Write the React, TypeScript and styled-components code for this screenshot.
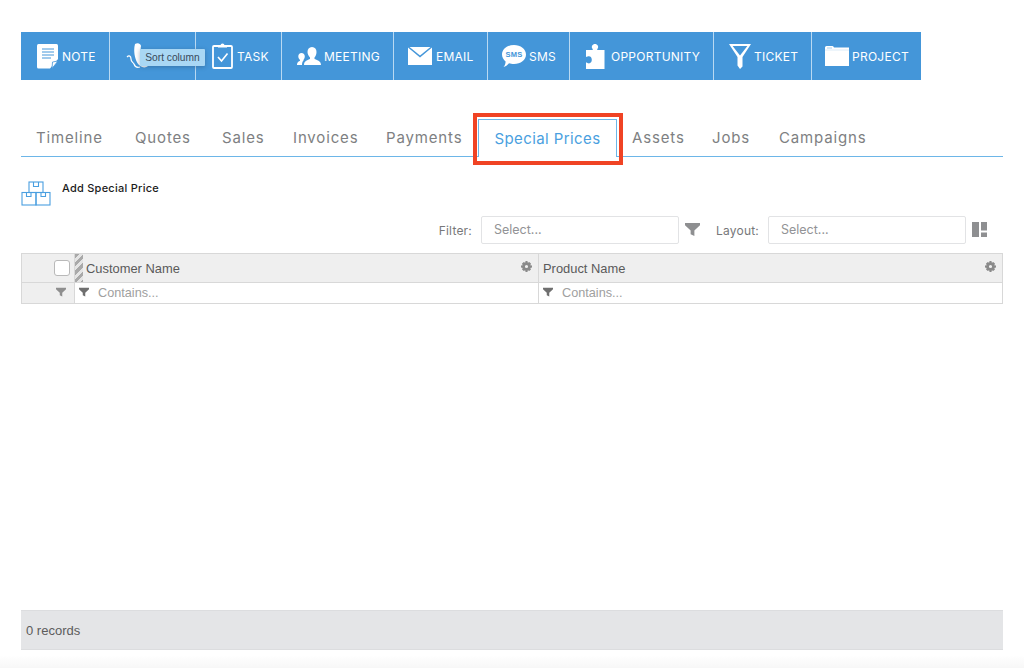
import styled, { createGlobalStyle } from 'styled-components';

const GlobalStyle = createGlobalStyle`
  html, body { margin: 0; padding: 0; background: #fff; }
  body { width: 1024px; height: 668px; overflow: hidden; font-family: Inter, "Liberation Sans", sans-serif; }
`;

const Page = styled.div`
  position: relative;
  width: 1024px;
  height: 668px;
  overflow: hidden;
`;

const Toolbar = styled.div`
  position: absolute;
  left: 21px;
  top: 32px;
  display: flex;
  height: 48px;
  background: #4496d9;
`;

const ToolButton = styled.div<{ $w: number; $pad: number; $gap: number }>`
  display: flex;
  align-items: center;
  box-sizing: border-box;
  width: ${p => p.$w}px;
  height: 48px;
  padding-left: ${p => p.$pad}px;
  gap: ${p => p.$gap}px;
  border-right: 1px solid #b9d9f2;
  color: #fff;
  font-size: 12px;
  font-weight: 400;
  letter-spacing: 0.25px;
  white-space: nowrap;
  &:last-child { border-right: 0; }
`;

const Tooltip = styled.div`
  position: absolute;
  left: 140px;
  top: 49px;
  width: 65px;
  height: 17px;
  background: #a9d7f4;
  border-radius: 1px;
  box-shadow: 0 1px 4px rgba(40, 70, 100, 0.4);
  color: #37495a;
  font-family: "Liberation Sans", Arial, sans-serif;
  font-size: 10.2px;
  line-height: 17px;
  text-align: center;
`;

const TabRow = styled.div`
  position: absolute;
  left: 21px;
  top: 119px;
  width: 982px;
  height: 38px;
  box-sizing: border-box;
  border-bottom: 1px solid #6db6e8;
`;

const Tab = styled.div<{ $x: number }>`
  position: absolute;
  left: ${p => p.$x - 21}px;
  top: 0;
  line-height: 38px;
  color: #7e7f82;
  font-size: 15px;
  font-weight: 400;
  letter-spacing: 0.85px;
  white-space: nowrap;
`;

const ActiveTab = styled.div`
  position: absolute;
  left: 457px;
  top: 0;
  width: 139px;
  height: 38px;
  box-sizing: border-box;
  border: 1px solid #6db6e8;
  border-bottom: 0;
  background: #fff;
  color: #4a9fe0;
  font-size: 15px;
  font-weight: 400;
  letter-spacing: 0.4px;
  line-height: 37px;
  text-align: center;
  white-space: nowrap;
`;

const Highlight = styled.div`
  position: absolute;
  left: 473px;
  top: 113px;
  width: 150px;
  height: 52px;
  box-sizing: border-box;
  border: 4px solid #f04324;
`;

const AddAction = styled.div`
  position: absolute;
  left: 21px;
  top: 181px;
  display: flex;
  align-items: flex-start;
  gap: 11px;
  color: #1c1c1c;
  font-size: 11px;
  font-weight: 500;
  letter-spacing: 0.25px;
  line-height: 14px;
`;

const AddLabel = styled.span`
  margin-top: 0;
`;

const FilterLabel = styled.label<{ $right: number }>`
  position: absolute;
  right: ${p => 1024 - p.$right}px;
  top: 223px;
  color: #77787a;
  font-size: 12px;
  font-weight: 400;
  letter-spacing: 0.2px;
  line-height: 15px;
`;

const SelectBox = styled.div<{ $x: number }>`
  position: absolute;
  left: ${p => p.$x}px;
  top: 216px;
  width: 198px;
  height: 28px;
  box-sizing: border-box;
  padding-left: 12px;
  background: #fff;
  border: 1px solid #e2e3e5;
  border-radius: 2px;
  color: #929396;
  font-size: 12.5px;
  line-height: 26px;
`;

const IconSlot = styled.div<{ $x: number; $y: number }>`
  position: absolute;
  left: ${p => p.$x}px;
  top: ${p => p.$y}px;
  line-height: 0;
`;

const Grid = styled.div`
  position: absolute;
  left: 21px;
  top: 253px;
  width: 982px;
  box-sizing: border-box;
  border: 1px solid #d8d8d8;
  font-family: "Liberation Sans", Arial, sans-serif;
`;

const GridRow = styled.div<{ $h: number }>`
  display: grid;
  grid-template-columns: 53px 464px 1fr;
  height: ${p => p.$h}px;
`;

const HeaderCell = styled.div<{ $last?: boolean }>`
  position: relative;
  box-sizing: border-box;
  background: #efefef;
  border-bottom: 1px solid #d8d8d8;
  border-right: ${p => (p.$last ? 0 : '1px solid #d8d8d8')};
  color: #5a5a5a;
  font-size: 12.9px;
  line-height: 29px;
`;

const HeaderText = styled.span<{ $x: number }>`
  position: absolute;
  left: ${p => p.$x}px;
  top: 0;
`;

const Gear = styled.div`
  position: absolute;
  right: 6px;
  top: 7px;
  line-height: 0;
`;

const Stripes = styled.div`
  position: absolute;
  left: 0;
  top: 0;
  width: 8px;
  height: 100%;
  background: repeating-linear-gradient(135deg, #a9a9a9 0 3px, #e4e4e4 3px 6px);
`;

const Check = styled.div`
  position: absolute;
  left: 32px;
  top: 6px;
  width: 16px;
  height: 16px;
  box-sizing: border-box;
  background: #fff;
  border: 1px solid #b9b9b9;
  border-radius: 3px;
`;

const FilterCell = styled.div<{ $shade?: boolean; $last?: boolean }>`
  position: relative;
  box-sizing: border-box;
  background: ${p => (p.$shade ? '#efefef' : '#fff')};
  border-right: ${p => (p.$last ? 0 : '1px solid #d8d8d8')};
  color: #a0a0a0;
  font-size: 12.7px;
  line-height: 21px;
`;

const FilterFunnel = styled.div<{ $x: number }>`
  position: absolute;
  left: ${p => p.$x}px;
  top: 4px;
  line-height: 0;
`;

const Placeholder = styled.span`
  position: absolute;
  left: 23px;
  top: 0;
`;

const Footer = styled.div`
  position: absolute;
  left: 21px;
  top: 610px;
  width: 982px;
  height: 40px;
  box-sizing: border-box;
  padding-left: 5px;
  background: #e4e5e7;
  border-top: 1px solid #dcdddf;
  border-bottom: 1px solid #dcdddf;
  color: #5c5c5c;
  font-family: "Liberation Sans", Arial, sans-serif;
  font-size: 13px;
  line-height: 40px;
`;

const BottomFade = styled.div`
  position: absolute;
  left: 0;
  right: 0;
  top: 655px;
  height: 13px;
  background: linear-gradient(#ffffff, #f7f7f7);
`;

const NoteIcon = () => (
  <svg width="21" height="25" viewBox="0 0 21 25">
    <path d="M0 1.5Q0 0 1.5 0H19.5Q21 0 21 1.5V15L13 24.5H1.5Q0 24.5 0 23Z" fill="#fff" />
    <path d="M5 5H17M5 8H17M5 11H17M5 14H14" stroke="#4496d9" strokeWidth="1" />
    <path d="M15 24.5 L15.5 18 L21 17 Z" fill="#fff" stroke="#4496d9" strokeWidth="0.8" />
  </svg>
);

const PhoneIcon = () => (
  <svg width="24" height="26" viewBox="0 0 24 26">
    <path d="M9 1C12 -1 15 1 15 3C14 8 15 14 19 18C21 19 22 21 22 23C20 25 16 25 13 22C9 18 7 8 9 1Z" fill="#fff" />
    <path d="M1 14C3 12 5 13 5 16C5 19 7 19 8 21C9 24 11 25 14 24" fill="none" stroke="#fff" strokeWidth="1.2" />
  </svg>
);

const TaskIcon = () => (
  <svg width="21" height="26" viewBox="0 0 21 26">
    <rect x="1" y="3" width="19" height="22" rx="1" fill="none" stroke="#fff" strokeWidth="1.8" />
    <path d="M6 4.5V2.5H8.5A2 2 0 0 1 12.5 2.5H15V4.5Z" fill="#fff" />
    <path d="M6 14L9.5 18L15.5 10.5" fill="none" stroke="#fff" strokeWidth="1.6" />
  </svg>
);

const MeetingIcon = () => (
  <svg width="24" height="18" viewBox="0 0 24 18">
    <path d="M15 0C18 0 19.5 2.2 19.5 5C19.5 7.5 18.5 9.5 17.5 10.5V12C19.5 13 24 13.5 24 18H7C7 13.5 11 13 13 12V10.5C12 9.5 10.5 7.5 10.5 5C10.5 2.2 12 0 15 0Z" fill="#fff" />
    <path d="M4.5 6C6.5 6 7.8 7.5 7.8 9.5C7.8 11 7 12.3 6.5 13V13.5C5.5 14.3 5 16 5 18H0C0 15 2 14.5 3 13.8V13C2.2 12.3 1.3 11 1.3 9.5C1.3 7.5 2.5 6 4.5 6Z" fill="#fff" />
  </svg>
);

const EmailIcon = () => (
  <svg width="24" height="18" viewBox="0 0 24 18">
    <path d="M0 0.5L12 10.5L24 0.5V18H0Z" fill="#fff" />
    <path d="M1.5 0H22.5L12 8.5Z" fill="#fff" />
  </svg>
);

const SmsIcon = () => (
  <svg width="24" height="23" viewBox="0 0 24 23">
    <path d="M12 0C18.6 0 24 4 24 9.5S18.6 19 12 19C10 19 8.5 18.7 7 18.2C5.5 20 3.5 21.8 1.5 22C2.8 20.5 3.6 18.5 3.6 16.4C1.4 14.6 0 12.2 0 9.5C0 4 5.4 0 12 0Z" fill="#fff" />
    <text x="12" y="12" textAnchor="middle" fontFamily="'Liberation Sans', sans-serif" fontSize="7.5" fontWeight="700" fill="#4496d9">SMS</text>
  </svg>
);

const PuzzleIcon = () => (
  <svg width="19" height="25" viewBox="0 0 19 25">
    <path d="M0 6H6.2C7 6 7 5 6.3 4.4C5 2.8 6.5 0 9 0C11.5 0 13 2.8 11.7 4.4C11 5 11 6 11.8 6H18.5V25H0V18.5C1 18.5 1.2 19 2 19.3C4.5 19.8 5.8 18 5.8 15.8C5.8 13.5 4.5 11.8 2 12.3C1.2 12.5 1 13 0 13Z" fill="#fff" />
  </svg>
);

const TicketIcon = () => (
  <svg width="22" height="25" viewBox="0 0 22 25">
    <path fillRule="evenodd" d="M0 0H22L13.5 13V22.5L11 25L8.5 21.5V13ZM3.6 2L11 11.5L18.4 2Z" fill="#fff" />
  </svg>
);

const ProjectIcon = () => (
  <svg width="24" height="20" viewBox="0 0 24 20">
    <path d="M0 1.5Q0 0 1.5 0H7.5Q8.5 0 9 1.5H24V20H0Z" fill="#fff" />
    <path d="M2 2H7" stroke="#a9cfee" strokeWidth="1" />
    <path d="M0 4H24" stroke="#dcecf8" strokeWidth="1" />
  </svg>
);

const BoxesIcon = () => (
  <svg width="30" height="25" viewBox="0 0 30 25" fill="none" stroke="#4a9fe0" strokeWidth="1.1">
    <rect x="8" y="1" width="14" height="10.5" />
    <rect x="1" y="11.5" width="14" height="12.5" />
    <rect x="15" y="11.5" width="14" height="12.5" />
    <path d="M12.5 1V5.5H17.5V1M5.5 11.5V15.5H10V11.5M20 11.5V15.5H24.5V11.5" />
  </svg>
);

const Funnel = ({ size, color }: { size: number; color: string }) => (
  <svg width={size} height={size} viewBox="0 0 16 16">
    <path d="M0 1H16V3.5L10 9V15L6 13V9L0 3.5Z" fill={color} />
  </svg>
);

const LayoutIcon = () => (
  <svg width="15" height="15" viewBox="0 0 15 15">
    <rect x="0" y="0" width="7" height="15" fill="#8e8f91" />
    <rect x="9" y="0" width="6" height="8.5" fill="#8e8f91" />
    <rect x="9" y="10.5" width="6" height="4.5" fill="#8e8f91" />
  </svg>
);

const GearIcon = () => (
  <svg width="11" height="11" viewBox="0 0 24 24">
    <path
      fillRule="evenodd"
      d="M10 0H14L15 4L18 2L22 6L20 9L24 10V14L20 15L22 18L18 22L15 20L14 24H10L9 20L6 22L2 18L4 15L0 14V10L4 9L2 6L6 2L9 4ZM12 8.5A3.5 3.5 0 1 0 12 15.5A3.5 3.5 0 1 0 12 8.5Z"
      fill="#8a8a8a"
    />
  </svg>
);

const tools = [
  { label: 'NOTE', w: 89, pad: 16, gap: 4, icon: <NoteIcon /> },
  { label: '', w: 86, pad: 16, gap: 0, icon: <PhoneIcon /> },
  { label: 'TASK', w: 86, pad: 16, gap: 4, icon: <TaskIcon /> },
  { label: 'MEETING', w: 112, pad: 15, gap: 3, icon: <MeetingIcon /> },
  { label: 'EMAIL', w: 94, pad: 14, gap: 4, icon: <EmailIcon /> },
  { label: 'SMS', w: 82, pad: 14, gap: 3, icon: <SmsIcon /> },
  { label: 'OPPORTUNITY', w: 144, pad: 16, gap: 6, icon: <PuzzleIcon /> },
  { label: 'TICKET', w: 98, pad: 15, gap: 3, icon: <TicketIcon /> },
  { label: 'PROJECT', w: 109, pad: 13, gap: 3, icon: <ProjectIcon /> },
];

const tabs = [
  { label: 'Timeline', x: 36 },
  { label: 'Quotes', x: 135 },
  { label: 'Sales', x: 222 },
  { label: 'Invoices', x: 293 },
  { label: 'Payments', x: 386 },
  { label: 'Assets', x: 632 },
  { label: 'Jobs', x: 712 },
  { label: 'Campaigns', x: 779 },
];

export default function App() {
  return (
    <Page>
      <GlobalStyle />
      <Toolbar>
        {tools.map(t => (
          <ToolButton key={t.w + t.label} $w={t.w} $pad={t.pad} $gap={t.gap}>
            {t.icon}
            {t.label}
          </ToolButton>
        ))}
      </Toolbar>
      <Tooltip>Sort column</Tooltip>

      <TabRow>
        {tabs.map(t => (
          <Tab key={t.label} $x={t.x}>{t.label}</Tab>
        ))}
        <ActiveTab>Special Prices</ActiveTab>
      </TabRow>
      <Highlight />

      <AddAction>
        <BoxesIcon />
        <AddLabel>Add Special Price</AddLabel>
      </AddAction>

      <FilterLabel $right={472}>Filter:</FilterLabel>
      <SelectBox $x={481}>Select...</SelectBox>
      <IconSlot $x={685} $y={222}><Funnel size={15} color="#8e8f91" /></IconSlot>
      <FilterLabel $right={759}>Layout:</FilterLabel>
      <SelectBox $x={768}>Select...</SelectBox>
      <IconSlot $x={972} $y={222}><LayoutIcon /></IconSlot>

      <Grid>
        <GridRow $h={29}>
          <HeaderCell><Check /></HeaderCell>
          <HeaderCell>
            <Stripes />
            <HeaderText $x={11}>Customer Name</HeaderText>
            <Gear><GearIcon /></Gear>
          </HeaderCell>
          <HeaderCell $last>
            <HeaderText $x={4}>Product Name</HeaderText>
            <Gear><GearIcon /></Gear>
          </HeaderCell>
        </GridRow>
        <GridRow $h={20}>
          <FilterCell $shade>
            <FilterFunnel $x={34}><Funnel size={10} color="#8e8e8e" /></FilterFunnel>
          </FilterCell>
          <FilterCell>
            <FilterFunnel $x={4}><Funnel size={10} color="#6f6f6f" /></FilterFunnel>
            <Placeholder>Contains...</Placeholder>
          </FilterCell>
          <FilterCell $last>
            <FilterFunnel $x={4}><Funnel size={10} color="#6f6f6f" /></FilterFunnel>
            <Placeholder>Contains...</Placeholder>
          </FilterCell>
        </GridRow>
      </Grid>

      <Footer>0 records</Footer>
      <BottomFade />
    </Page>
  );
}
